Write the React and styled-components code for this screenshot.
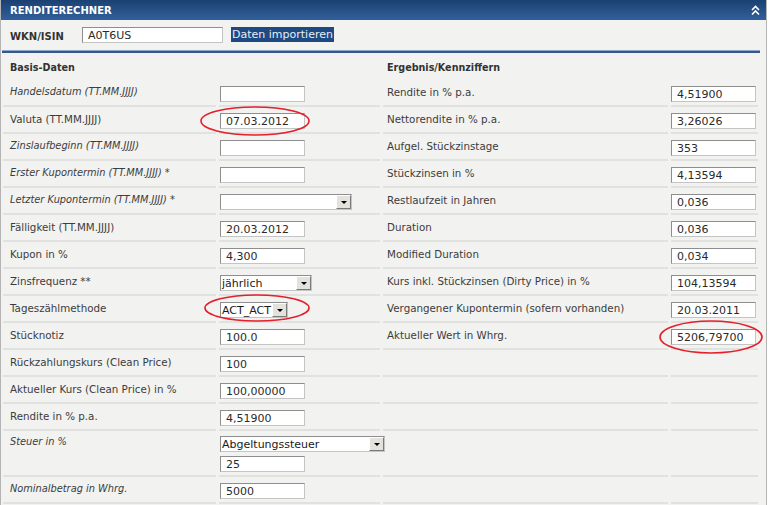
import styled, { createGlobalStyle } from 'styled-components'

const GlobalStyle = createGlobalStyle`
  body {
    margin: 0;
    background: #ffffff;
    font-family: "DejaVu Sans", Verdana, sans-serif;
  }
`;

const Panel = styled.div`
  position: relative;
  width: 765px;
  height: 505px;
  overflow: hidden;
  background: #f2f2f0;
  border-left: 1px solid #b4b4b4;
  border-right: 1px solid #b4b4b4;
`;

const Header = styled.div`
  height: 20px;
  display: flex;
  align-items: center;
  justify-content: space-between;
  padding: 0 6px 0 9px;
  background: linear-gradient(#1b4172, #31609a);
  color: #ffffff;
  font-size: 10px;
  font-weight: bold;
`;

const ImportRow = styled.div`
  height: 30px;
  display: flex;
  align-items: center;
  padding-left: 9px;
`;

const ImportLabel = styled.span`
  width: 72px;
  font-size: 10px;
  font-weight: bold;
  color: #333333;
  padding-top: 3px;
`;

const ImportButton = styled.button`
  height: 15px;
  margin: -2px 0 0 8px;
  padding: 0 1px;
  border: none;
  background: #1d4a82;
  color: #e6edf7;
  font-family: inherit;
  font-size: 11px;
  line-height: 15px;
`;

const Rule = styled.div`
  height: 2px;
  margin: 0 6px 0 1px;
  border-top: 1px solid #8ea7c9;
  background: #36598a;
`;

const Grid = styled.div`
  display: grid;
  grid-template-columns: 213px 161px 285px 87px;
  column-gap: 3px;
  padding-left: 2px;
`;

const Heading = styled.div`
  height: 27px;
  box-sizing: border-box;
  padding: 9px 0 0 ${p => (p.$right ? 4 : 7)}px;
  font-size: 9.6px;
  font-weight: bold;
  line-height: 12px;
  color: #333333;
`;

const Cell = styled.div`
  height: ${p => (p.$tall ? 46 : 27)}px;
  box-sizing: border-box;
  border-bottom: 2px solid #e1e1df;
  padding-top: ${p => (p.$tall ? 5 : 6)}px;
`;

const Label = styled(Cell)`
  padding-left: ${p => (p.$right ? 4 : 7)}px;
  font-size: ${p => (p.$italic ? 9.8 : 10.3)}px;
  font-style: ${p => (p.$italic ? 'italic' : 'normal')};
  line-height: 12px;
  color: #3c3c3c;
  white-space: nowrap;
`;

const Field = styled(Cell)`
  display: flex;
  flex-direction: column;
  gap: 4px;
  padding-left: ${p => (p.$right ? 0 : 1)}px;
`;

const Input = styled.input`
  width: ${p => p.$w || 85}px;
  height: 16px;
  box-sizing: border-box;
  margin: 0;
  padding: 0 0 0 5px;
  border: 1px solid #c4c4c4;
  border-top-color: #8e8e8e;
  border-left-color: #8e8e8e;
  background: #ffffff;
  color: #2a2a2a;
  font-family: inherit;
  font-size: 11px;
  outline: none;
`;

const Select = styled.div`
  width: ${p => p.$w}px;
  height: 16px;
  box-sizing: border-box;
  display: flex;
  align-items: center;
  justify-content: space-between;
  padding-left: 1px;
  border: 1px solid #c4c4c4;
  border-top-color: #8e8e8e;
  border-left-color: #8e8e8e;
  background: #ffffff;
  color: #1a1a1a;
  font-size: 11px;
  white-space: nowrap;
`;

const Arrow = styled.span`
  width: 15px;
  height: 14px;
  box-sizing: border-box;
  display: flex;
  align-items: center;
  justify-content: center;
  background: #e4e2dc;
  border: 1px solid #ffffff;
  border-right-color: #7a7a7a;
  border-bottom-color: #7a7a7a;
  &::after {
    content: '';
    border-left: 3px solid transparent;
    border-right: 3px solid transparent;
    border-top: 3px solid #000000;
  }
`;

const Marks = styled.svg`
  position: absolute;
  top: 0;
  left: 0;
  pointer-events: none;
`;

const left = [
  { label: 'Handelsdatum (TT.MM.JJJJ)', italic: true, value: '' },
  { label: 'Valuta (TT.MM.JJJJ)', value: '07.03.2012' },
  { label: 'Zinslaufbeginn (TT.MM.JJJJ)', italic: true, value: '' },
  { label: 'Erster Kupontermin (TT.MM.JJJJ) *', italic: true, value: '' },
  { label: 'Letzter Kupontermin (TT.MM.JJJJ) *', italic: true, select: '', w: 132 },
  { label: 'Fälligkeit (TT.MM.JJJJ)', value: '20.03.2012' },
  { label: 'Kupon in %', value: '4,300' },
  { label: 'Zinsfrequenz **', select: 'jährlich', w: 92 },
  { label: 'Tageszählmethode', select: 'ACT_ACT', w: 68 },
  { label: 'Stücknotiz', value: '100.0' },
  { label: 'Rückzahlungskurs (Clean Price)', value: '100' },
  { label: 'Aktueller Kurs (Clean Price) in %', value: '100,00000' },
  { label: 'Rendite in % p.a.', value: '4,51900' },
  { label: 'Steuer in %', italic: true, select: 'Abgeltungssteuer', w: 165, value: '25', tall: true },
  { label: 'Nominalbetrag in Whrg.', italic: true, value: '5000' },
];

const right = [
  ['Rendite in % p.a.', '4,51900'],
  ['Nettorendite in % p.a.', '3,26026'],
  ['Aufgel. Stückzinstage', '353'],
  ['Stückzinsen in %', '4,13594'],
  ['Restlaufzeit in Jahren', '0,036'],
  ['Duration', '0,036'],
  ['Modified Duration', '0,034'],
  ['Kurs inkl. Stückzinsen (Dirty Price) in %', '104,13594'],
  ['Vergangener Kupontermin (sofern vorhanden)', '20.03.2011'],
  ['Aktueller Wert in Whrg.', '5206,79700'],
];

const Collapse = () => (
  <svg width="9" height="10" viewBox="0 0 9 10">
    <polyline points="1,5 4.5,1.5 8,5" fill="none" stroke="#fff" strokeWidth="1.6" />
    <polyline points="1,9.5 4.5,6 8,9.5" fill="none" stroke="#fff" strokeWidth="1.6" />
  </svg>
);

const App = () => {
  return (
    <>
      <GlobalStyle />
      <Panel>
        <Header>
          <span>RENDITERECHNER</span>
          <Collapse />
        </Header>
        <ImportRow>
          <ImportLabel>WKN/ISIN</ImportLabel>
          <Input $w={141} defaultValue="A0T6US" />
          <ImportButton>Daten importieren</ImportButton>
        </ImportRow>
        <Rule />
        <Grid>
          <Heading>Basis-Daten</Heading>
          <div />
          <Heading $right>Ergebnis/Kennziffern</Heading>
          <div />
          {left.map((row, i) => {
            const r = right[i];
            return [
              <Label key={'l' + i} $italic={row.italic} $tall={row.tall}>{row.label}</Label>,
              <Field key={'f' + i} $tall={row.tall}>
                {row.select !== undefined && (
                  <Select $w={row.w}>
                    <span>{row.select}</span>
                    <Arrow />
                  </Select>
                )}
                {row.value !== undefined && <Input defaultValue={row.value} />}
              </Field>,
              <Label key={'r' + i} $right $tall={row.tall}>{r ? r[0] : ''}</Label>,
              <Field key={'v' + i} $right $tall={row.tall}>
                {r && <Input defaultValue={r[1]} />}
              </Field>,
            ];
          })}
        </Grid>
        <Marks width="767" height="505">
          <g fill="none" stroke="#e3202b" strokeWidth="1.6">
            <ellipse cx="254" cy="121" rx="54" ry="14" />
            <ellipse cx="256" cy="308" rx="52" ry="13" />
            <ellipse cx="710" cy="337" rx="51" ry="16" />
          </g>
        </Marks>
      </Panel>
    </>
  )
}

export default App;
